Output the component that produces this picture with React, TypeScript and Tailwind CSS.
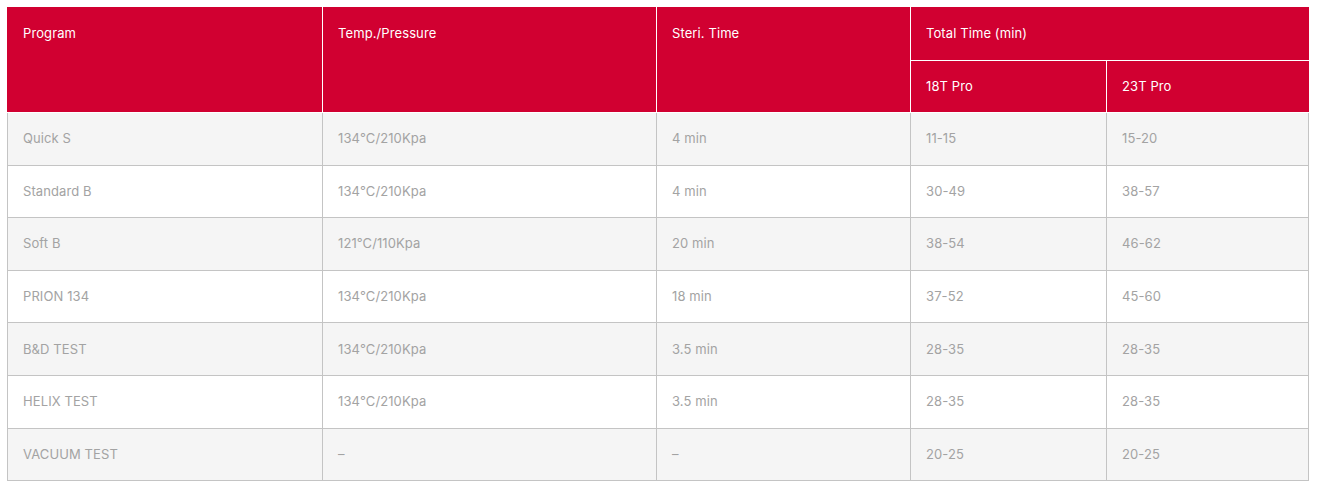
import React from 'react'

interface Row {
    program: string
    temp: string
    time: string
    t18: string
    t23: string
}

const rows: Row[] = [
    { program: 'Quick S', temp: '134℃/210Kpa', time: '4 min', t18: '11-15', t23: '15-20' },
    { program: 'Standard B', temp: '134℃/210Kpa', time: '4 min', t18: '30-49', t23: '38-57' },
    { program: 'Soft B', temp: '121℃/110Kpa', time: '20 min', t18: '38-54', t23: '46-62' },
    { program: 'PRION 134', temp: '134℃/210Kpa', time: '18 min', t18: '37-52', t23: '45-60' },
    { program: 'B&D TEST', temp: '134℃/210Kpa', time: '3.5 min', t18: '28-35', t23: '28-35' },
    { program: 'HELIX TEST', temp: '134℃/210Kpa', time: '3.5 min', t18: '28-35', t23: '28-35' },
    { program: 'VACUUM TEST', temp: '–', time: '–', t18: '20-25', t23: '20-25' },
]

export default function App() {
    const th = 'border border-white bg-[#d10031] px-[15px] text-left align-top font-normal text-white'
    const td = 'border border-[#c4c4c4] px-[15px] align-middle text-[#a3a3a3]'

    return (
        <div className="bg-white p-[7px] font-['Inter','Open_Sans',sans-serif] text-[13px] leading-[17px] tracking-[0.1px]">
            <table className="w-[1301px] table-fixed border-collapse">
                <colgroup>
                    <col className="w-[315px]" />
                    <col className="w-[334px]" />
                    <col className="w-[254px]" />
                    <col className="w-[196px]" />
                    <col className="w-[202px]" />
                </colgroup>
                <thead>
                    <tr className="h-[53px]">
                        <th rowSpan={2} className={`${th} border-l-[#d10031] border-t-[#d10031] pt-[17px]`}>Program</th>
                        <th rowSpan={2} className={`${th} border-t-[#d10031] pt-[17px]`}>Temp./Pressure</th>
                        <th rowSpan={2} className={`${th} border-t-[#d10031] pt-[17px]`}>Steri. Time</th>
                        <th colSpan={2} className={`${th} border-t-[#d10031] border-r-[#d10031] pt-[17px]`}>Total Time (min)</th>
                    </tr>
                    <tr className="h-[52px]">
                        <th className={`${th} pt-[17px]`}>18T Pro</th>
                        <th className={`${th} border-r-[#d10031] pt-[17px]`}>23T Pro</th>
                    </tr>
                </thead>
                <tbody>
                    {rows.map((r, i) => (
                        <tr key={r.program} className={`h-[52.6px] ${i % 2 === 0 ? 'bg-[#f5f5f5]' : 'bg-white'}`}>
                            <td className={td}>{r.program}</td>
                            <td className={td}>{r.temp}</td>
                            <td className={td}>{r.time}</td>
                            <td className={td}>{r.t18}</td>
                            <td className={td}>{r.t23}</td>
                        </tr>
                    ))}
                </tbody>
            </table>
        </div>
    )
}
